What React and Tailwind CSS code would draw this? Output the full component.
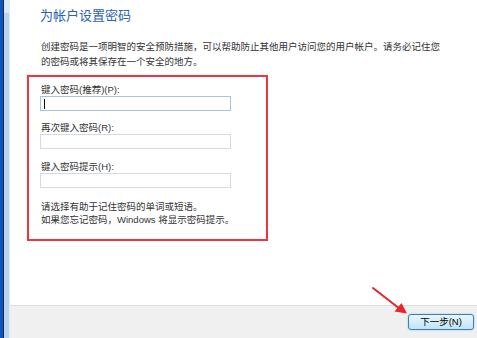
import React from "react";

const PasswordField = ({ label, focused }) => (
  <>
    <p className="leading-[13px]">{label}</p>
    <div
      className={`relative -ml-px w-[191px] h-[15px] bg-white border ${
        focused ? "border-[#a9c1dc]" : "border-[#d3dce6]"
      }`}
    >
      {focused && <span className="absolute left-[3px] top-[2px] w-px h-[10px] bg-black" />}
    </div>
  </>
);

const App = () => {
  return (
    <div className="relative w-[477px] h-[338px] flex bg-white text-[9.5px] text-[#333] font-['Liberation_Sans','Noto_Sans_CJK_SC',sans-serif] overflow-hidden">
      {/* Window frame on the left */}
      <div className="w-[3px] bg-[#0b55bd]" />
      <div className="w-px bg-[#17294a]" />
      <div className="w-[5px] flex flex-col">
        <div className="h-[13px] bg-[#dbe8f6]" />
        <div className="flex-1 bg-[#bdd4ee]" />
      </div>
      <div className="w-px bg-[#dfe9f5]" />

      <div className="flex-1 flex flex-col">
        {/* Content */}
        <div className="h-[305px] pl-[17px] pt-[7px]">
          <h1 className="ml-[13px] text-[13px] leading-[17px] text-[#2a63b2] font-normal">
            为帐户设置密码
          </h1>
          <p className="ml-[14px] mt-[15px] leading-[15px]">
            创建密码是一项明智的安全预防措施，可以帮助防止其他用户访问您的用户帐户。请务必记住您
            <br />
            的密码或将其保存在一个安全的地方。
          </p>

          <div className="mt-[6px] w-[241px] h-[166px] border-2 border-[#ec3540] pl-[12px] pt-[6px]">
            <PasswordField label="键入密码(推荐)(P):" focused />
            <div className="mt-[10px]" />
            <PasswordField label="再次键入密码(R):" />
            <div className="mt-[11px]" />
            <PasswordField label="键入密码提示(H):" />
            <p className="mt-[12px] leading-[13px]">
              请选择有助于记住密码的单词或短语。
              <br />
              如果您忘记密码，Windows 将显示密码提示。
            </p>
          </div>
        </div>

        {/* Footer */}
        <div className="flex-1 bg-[#f0f0f0] border-t border-[#dfdfdf] flex justify-end items-start pt-[8px] pr-[3px]">
          <button className="w-[66px] h-[16px] rounded-[3px] border border-[#3c7fb1] bg-gradient-to-b from-[#eaf6fd] to-[#bfe4f8] shadow-[0_0_2px_#7cc6f0] text-[9.5px] leading-[14px] text-black">
            下一步(N)
          </button>
        </div>
      </div>

      {/* Red annotation arrow */}
      <svg
        className="absolute inset-0 pointer-events-none"
        width="477"
        height="338"
        viewBox="0 0 477 338"
      >
        <line x1="373" y1="288" x2="400" y2="309" stroke="#e8252a" strokeWidth="2" strokeLinecap="round" />
        <polygon points="407,313.5 394.5,311.5 401.5,303" fill="#e8252a" />
      </svg>
    </div>
  );
};

export default App;
